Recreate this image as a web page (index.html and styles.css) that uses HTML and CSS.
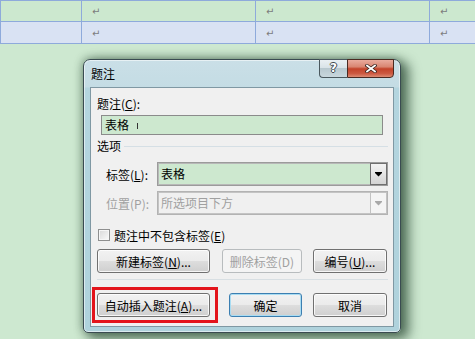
FILE: index.html
```html
<!DOCTYPE html>
<html lang="zh-CN">
<head>
    <meta charset="UTF-8">
    <meta name="viewport" content="width=device-width, initial-scale=1.0">
    <title>题注</title>
    <link rel="stylesheet" href="styles.css">
</head>
<body>
    <table class="doc-table">
        <colgroup>
            <col class="col-a">
            <col class="col-b">
            <col class="col-b">
            <col class="col-d">
        </colgroup>
        <tr class="row-green">
            <td></td>
            <td><span class="mark">↵</span></td>
            <td><span class="mark">↵</span></td>
            <td><span class="mark">↵</span></td>
        </tr>
        <tr class="row-blue">
            <td></td>
            <td><span class="mark">↵</span></td>
            <td><span class="mark">↵</span></td>
            <td><span class="mark">↵</span></td>
        </tr>
    </table>

    <div class="dialog">
        <div class="titlebar">
            <span class="title">题注</span>
            <div class="caption-btns">
                <div class="cap-help">?</div>
                <div class="cap-close">
                    <svg width="12" height="9" viewBox="0 0 12 9">
                        <path d="M2 1.5 L10 7.5 M10 1.5 L2 7.5" stroke="#3b2520" stroke-width="3.4" stroke-linecap="square"/>
                        <path d="M2 1.5 L10 7.5 M10 1.5 L2 7.5" stroke="#ffffff" stroke-width="1.7" stroke-linecap="square"/>
                    </svg>
                </div>
            </div>
        </div>

        <div class="client">
            <div class="cap-label">题注(<u>C</u>):</div>
            <div class="cap-input">表格<span class="ibeam"></span></div>

            <div class="group-title">
                <span>选项</span>
                <span class="group-line"></span>
            </div>

            <div class="field-row">
                <span class="field-label">标签(<u>L</u>):</span>
                <div class="combo">
                    <span class="combo-text">表格</span>
                    <span class="combo-btn">
                        <svg width="7" height="5" viewBox="0 0 7 5"><rect x="0" y="0" width="7" height="1" fill="#000"/><polygon points="0,1 7,1 3.5,4.6" fill="#000"/></svg>
                    </span>
                </div>
            </div>

            <div class="field-row second">
                <span class="field-label disabled">位置(P):</span>
                <div class="combo disabled">
                    <span class="combo-text">所选项目下方</span>
                    <span class="combo-btn">
                        <svg width="7" height="5" viewBox="0 0 7 5"><rect x="0" y="0" width="7" height="1" fill="#a8a8a8"/><polygon points="0,1 7,1 3.5,4.6" fill="#a8a8a8"/></svg>
                    </span>
                </div>
            </div>

            <div class="check-row">
                <span class="checkbox"></span>
                <span>题注中不包含标签(<u>E</u>)</span>
            </div>

            <div class="btn-row">
                <div class="btn wide">新建标签(<u>N</u>)...</div>
                <div class="btn mid disabled">删除标签(D)</div>
                <div class="btn small">编号(<u>U</u>)...</div>
            </div>

            <div class="sep"></div>

            <div class="btn-row bottom">
                <div class="btn wide">自动插入题注(<u>A</u>)...</div>
                <div class="btn ok default">确定</div>
                <div class="btn small">取消</div>
            </div>

            <div class="highlight"></div>
        </div>
    </div>
</body>
</html>
```

FILE: styles.css
```css
body {
    margin: 0;
    width: 475px;
    height: 339px;
    overflow: hidden;
    background: #cde8d0;
    font-family: "Noto Sans CJK SC", "Noto Sans", sans-serif;
    font-size: 12px;
    color: #000;
}

u {
    text-decoration: underline;
    text-underline-offset: 1px;
}

/* word table behind the dialog */
.doc-table {
    border-collapse: collapse;
    table-layout: fixed;
    width: 475px;
}
.col-a { width: 81px; }
.col-b { width: 174px; }
.col-d { width: 46px; }

.doc-table td {
    border: 1px solid #8eaadb;
    padding: 0 0 0 10px;
    line-height: 12px;
    overflow: hidden;
}
.doc-table td:last-child { border-right: none; }
.row-green td { height: 20px; background: #cce8cf; }
.row-blue td { height: 21px; background: #d9e2f3; }

.mark {
    font-family: "DejaVu Sans", sans-serif;
    font-size: 10px;
    color: #7c7c7c;
}

/* dialog window */
.dialog {
    position: absolute;
    left: 83px;
    top: 59px;
    width: 318px;
    height: 274px;
    box-sizing: border-box;
    border: 1px solid #3a4b51;
    border-radius: 7px 7px 5px 5px;
    padding: 0 6px 5px 6px;
    display: flex;
    flex-direction: column;
    background: linear-gradient(180deg, #cadfe7 0, #c4dce4 27px, #b4d5df 28px, #afd2dc 100%);
    box-shadow: inset 0 0 0 1px rgba(255, 255, 255, 0.55),
                6px 4px 12px 2px rgba(25, 55, 35, 0.65),
                -1px -1px 8px rgba(25, 55, 35, 0.35);
}

.titlebar {
    height: 27px;
    display: flex;
    justify-content: space-between;
    flex-shrink: 0;
}
.title {
    padding-left: 1px;
    line-height: 27px;
}

.caption-btns {
    display: flex;
    margin-top: -1px;
    height: 19px;
}
.cap-help {
    width: 28px;
    box-sizing: border-box;
    border: 1px solid #4a585e;
    border-right: none;
    border-radius: 0 0 0 4px;
    background: linear-gradient(180deg, #eaf0f3 0, #d9e3e8 45%, #b8c8cf 50%, #c9d7dd 100%);
    color: #fff;
    font-family: "DejaVu Sans", sans-serif;
    font-weight: bold;
    font-size: 12px;
    line-height: 17px;
    text-align: center;
    text-shadow: 1px 0 0 #3d4a50, -1px 0 0 #3d4a50, 0 1px 0 #3d4a50, 0 -1px 0 #3d4a50;
}
.cap-close {
    width: 47px;
    box-sizing: border-box;
    border: 1px solid #4a2a22;
    border-radius: 0 0 4px 0;
    background: linear-gradient(180deg, #eaab9d 0, #d98672 40%, #c3432a 52%, #cc5a42 80%, #dd8c74 100%);
    display: flex;
    align-items: center;
    justify-content: center;
}

.client {
    position: relative;
    flex: 1;
    border: 1px solid #7f98a3;
    background: #f0f0f0;
    padding: 8px 5px 0 6px;
}

.cap-label {
    line-height: 16px;
}
.cap-input {
    margin: 3px 5px 0 4px;
    height: 20px;
    box-sizing: border-box;
    border: 1px solid #8b8b8b;
    background: #cde8cf;
    padding-left: 3px;
    line-height: 18px;
    display: flex;
    align-items: center;
}
.ibeam {
    display: inline-block;
    width: 1px;
    height: 6px;
    background: #333;
    margin-left: 8px;
    margin-top: 2px;
}

.group-title {
    margin-top: 3px;
    line-height: 16px;
    display: flex;
    align-items: center;
}
.group-line {
    flex: 1;
    height: 1px;
    background: #d5dfe5;
    margin-left: 3px;
}

.field-row {
    margin-top: 8px;
    padding-left: 9px;
    display: flex;
    align-items: center;
}
.field-row.second {
    margin-top: 5px;
}
.field-label {
    width: 51px;
}
.disabled {
    color: #a0a0a0;
}

.combo {
    width: 231px;
    height: 24px;
    box-sizing: border-box;
    border: 1px solid #9b9b9b;
    display: flex;
}
.combo-text {
    flex: 1;
    border: 1px solid #b8b8b8;
    border-right: none;
    background: #cde8cf;
    padding-left: 2px;
    line-height: 20px;
}
.combo-btn {
    width: 17px;
    box-sizing: border-box;
    border: 1px solid #6f6f6f;
    background: linear-gradient(180deg, #f3f3f3, #e4e4e4 50%, #d4d4d4);
    display: flex;
    align-items: center;
    justify-content: center;
}
.combo.disabled {
    border-color: #b3b3b3;
}
.combo.disabled .combo-text {
    background: #f0f0f0;
    border-color: #c4c4c4;
}
.combo.disabled .combo-btn {
    border-color: #c2c2c2;
    background: #f4f4f4;
}

.check-row {
    margin-top: 12px;
    height: 16px;
    padding-left: 1px;
    display: flex;
    align-items: center;
}
.checkbox {
    width: 12px;
    height: 12px;
    box-sizing: border-box;
    border: 1px solid #8e8f8f;
    background: linear-gradient(135deg, #d8d8d8, #fafafa);
    box-shadow: inset 0 0 0 1px #f6f6f6;
    margin-right: 4px;
}

.btn-row {
    margin-top: 6px;
    display: flex;
}
.btn-row.bottom {
    margin-top: 13px;
}
.sep {
    margin-top: 6px;
    height: 1px;
    background: #d8dfe3;
}

.btn {
    height: 24px;
    box-sizing: border-box;
    border: 1px solid #707070;
    border-radius: 3px;
    background: linear-gradient(180deg, #f2f2f2 0, #ebebeb 48%, #dddddd 52%, #cfcfcf 100%);
    box-shadow: inset 0 0 0 1px rgba(255, 255, 255, 0.8);
    display: flex;
    align-items: center;
    justify-content: center;
}
.btn.wide { width: 113px; }
.btn.mid { width: 80px; margin-left: 12px; }
.btn.ok { width: 73px; margin-left: 19px; }
.btn.small { width: 74px; margin-left: 11px; }

.btn.disabled {
    border-color: #b8bcbe;
    background: #f4f4f4;
    box-shadow: none;
}
.btn.default {
    border-color: #3c7fb1;
    box-shadow: inset 0 0 0 1px #a9dcf2;
}

/* red annotation box */
.highlight {
    position: absolute;
    left: 1px;
    top: 199px;
    width: 126px;
    height: 36px;
    box-sizing: border-box;
    border: 3px solid #e3141b;
}
```
